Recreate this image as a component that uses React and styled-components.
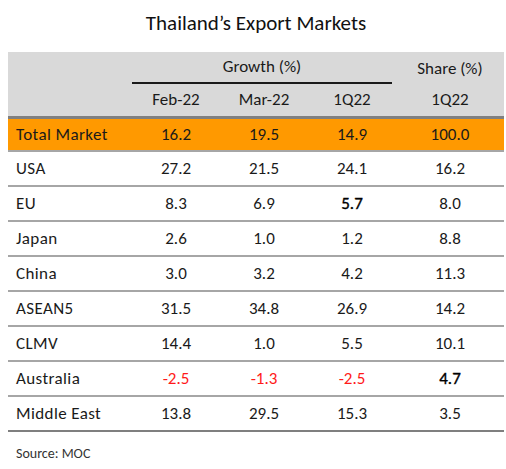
import React from 'react'
import { styled, createGlobalStyle } from 'styled-components';

const GlobalStyle = createGlobalStyle`
  body {
    margin: 0;
    background: #fff;
    font-family: Carlito, Lato, "Liberation Sans", sans-serif;
    color: #1a1a1a;
  }
`;

// values ending in * are shown a little heavier, as in the source table
const rows = [
  ['USA', '27.2', '21.5', '24.1', '16.2'],
  ['EU', '8.3', '6.9', '5.7*', '8.0'],
  ['Japan', '2.6', '1.0', '1.2', '8.8'],
  ['China', '3.0', '3.2', '4.2', '11.3'],
  ['ASEAN5', '31.5', '34.8', '26.9', '14.2'],
  ['CLMV', '14.4', '1.0', '5.5', '10.1'],
  ['Australia', '-2.5', '-1.3', '-2.5', '4.7*'],
  ['Middle East', '13.8', '29.5', '15.3', '3.5'],
];

function App() {
  return (
    <Page>
      <GlobalStyle />
      <Title>Thailand’s Export Markets</Title>
      <Table>
        <colgroup>
          <col style={{ width: 124 }} />
          <col style={{ width: 88 }} />
          <col style={{ width: 88 }} />
          <col style={{ width: 88 }} />
          <col />
        </colgroup>
        <thead>
          <HeadRow>
            <HeadCell />
            <HeadCell colSpan={3}>
              <GroupLabel>Growth (%)</GroupLabel>
            </HeadCell>
            <HeadCell>Share (%)</HeadCell>
          </HeadRow>
          <HeadRow $last>
            <HeadCell />
            <HeadCell>Feb-22</HeadCell>
            <HeadCell>Mar-22</HeadCell>
            <HeadCell>1Q22</HeadCell>
            <HeadCell>1Q22</HeadCell>
          </HeadRow>
        </thead>
        <tbody>
          <TotalRow>
            <Label>Total Market</Label>
            <Value>16.2</Value>
            <Value>19.5</Value>
            <Value>14.9</Value>
            <Value>100.0</Value>
          </TotalRow>
          {rows.map((r, i) => (
            <Row key={r[0]} $last={i === rows.length - 1}>
              <Label>{r[0]}</Label>
              {r.slice(1).map((v, j) => (
                <Value key={j} $neg={v.startsWith('-')} $strong={v.endsWith('*')}>
                  {v.replace('*', '')}
                </Value>
              ))}
            </Row>
          ))}
        </tbody>
      </Table>
      <Source>Source: MOC</Source>
    </Page>
  );
}

const Page = styled.div`
  width: 506px;
  height: 469px;
  padding: 0 2px 0 8px;
  box-sizing: border-box;
`;

const Title = styled.h1`
  margin: 0;
  padding-top: 10px;
  height: 52px;
  box-sizing: border-box;
  text-align: center;
  font-size: 21px;
  font-weight: 400;
  color: #111;
`;

const Table = styled.table`
  width: 496px;
  border-collapse: collapse;
  table-layout: fixed;
  font-size: 17px;
`;

const HeadRow = styled.tr`
  background: #d9d9d9;
  height: ${p => (p.$last ? '33px' : '31px')};
  border-bottom: ${p => (p.$last ? '3px solid #808080' : 'none')};
`;

const HeadCell = styled.th`
  font-weight: 400;
  text-align: center;
  padding: 0;
  color: #1a1a1a;
  vertical-align: middle;
`;

const GroupLabel = styled.div`
  margin-right: 4px;
  padding: 4px 0 5px;
  border-bottom: 2px solid #1a1a1a;
`;

const TotalRow = styled.tr`
  background: #ff9900;
  height: 34px;
  border-bottom: 2px solid #a6a6a6;
`;

const Row = styled.tr`
  height: 35px;
  border-bottom: 2px solid ${p => (p.$last ? '#7f7f7f' : '#a6a6a6')};
`;

const Label = styled.td`
  padding: 0 0 0 8px;
  white-space: nowrap;
  letter-spacing: 0.4px;
`;

const Value = styled.td`
  text-align: center;
  padding: 0;
  color: ${p => (p.$neg ? '#ff1a1a' : p.$strong ? '#000' : '#1a1a1a')};
  -webkit-text-stroke: ${p => (p.$strong ? '0.35px #000' : '0')};
`;

const Source = styled.div`
  margin-top: 13px;
  padding-left: 8px;
  font-size: 14px;
  color: #333;
`;

export default App
